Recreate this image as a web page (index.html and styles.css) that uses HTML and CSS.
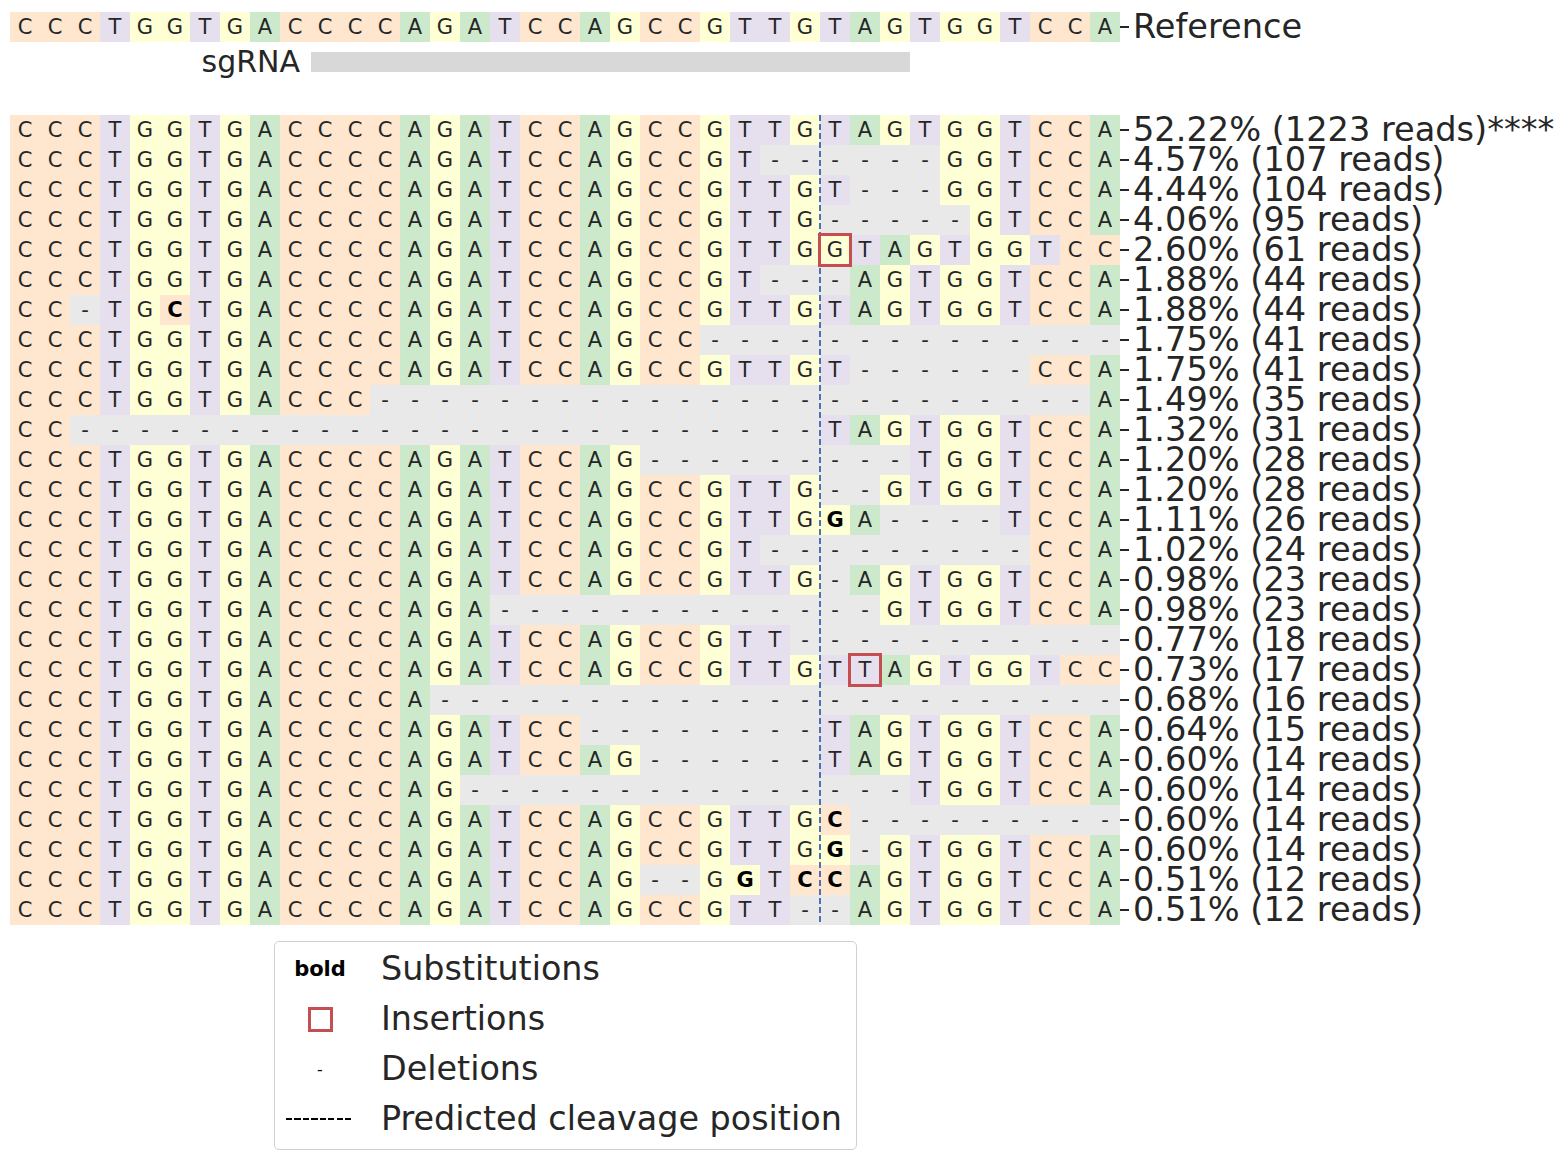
FILE: index.html
```html
<!DOCTYPE html>
<html lang="en">
<head>
<meta charset="utf-8">
<title>Allele plot</title>
<link rel="stylesheet" href="styles.css">
</head>
<body>
<div class="figure">
  <div class="row" id="ref-row"></div>
  <div class="sgrna-row">
    <div class="sgrna-label">sgRNA</div>
    <div class="sgrna-bar"></div>
  </div>
  <div class="alleles" id="alleles">
    <div class="cut"></div>
  </div>
  <div class="legend">
    <div class="legend-item">
      <div class="handle"><span class="h-bold">bold</span></div>
      <div class="legend-text">Substitutions</div>
    </div>
    <div class="legend-item">
      <div class="handle"><span class="h-ins"></span></div>
      <div class="legend-text">Insertions</div>
    </div>
    <div class="legend-item">
      <div class="handle"><span class="h-del">-</span></div>
      <div class="legend-text">Deletions</div>
    </div>
    <div class="legend-item">
      <div class="handle"><span class="h-cut"></span></div>
      <div class="legend-text">Predicted cleavage position</div>
    </div>
  </div>
</div>
<script src="script.js"></script>
</body>
</html>
```

FILE: styles.css
```css
body {
  margin: 0;
  background: #ffffff;
  font-family: "DejaVu Sans", "Liberation Sans", sans-serif;
  color: #262626;
}
.figure {
  padding: 12px 0 0 10px;
}
.row {
  display: flex;
  align-items: center;
  height: 30px;
}
.seq {
  display: grid;
  grid-template-columns: repeat(37, 30px);
  height: 30px;
}
.cell {
  height: 30px;
  line-height: 30px;
  text-align: center;
  font-size: 21px;
  position: relative;
}
.nA { background: #cce9cc; }
.nT { background: #e5dfee; }
.nC { background: #fee6cf; }
.nG { background: #ffffd6; }
.del { background: #e9e9e9; }
.sub { font-weight: bold; color: #000000; }
.ins::after {
  content: "";
  position: absolute;
  inset: -2px;
  border: 3.5px solid #c44e52;
  z-index: 2;
}
.tick {
  width: 9px;
  height: 1.5px;
  background: #262626;
  margin-right: 4px;
  flex: none;
}
.label {
  font-size: 33.6px;
  line-height: 30px;
  white-space: nowrap;
}
.sgrna-row {
  display: flex;
  align-items: center;
  height: 20px;
  margin-top: 10px;
}
.sgrna-label {
  width: 290px;
  text-align: right;
  font-size: 30px;
  line-height: 20px;
}
.sgrna-bar {
  margin-left: 11px;
  width: 599px;
  height: 20px;
  background: #d8d8d8;
}
.alleles {
  position: relative;
  margin-top: 43px;
}
.cut {
  position: absolute;
  left: 809px;
  top: 0;
  bottom: 0;
  width: 2px;
  background: repeating-linear-gradient(to bottom, #4c72b0 0 6px, transparent 6px 9px);
  z-index: 1;
}
.legend {
  margin: 16px 0 0 264px;
  width: 583px;
  box-sizing: border-box;
  border: 1px solid #d0d0d0;
  border-radius: 5px;
  padding: 2px 0 5px 11px;
}
.legend-item {
  display: flex;
  align-items: center;
  height: 50px;
}
.handle {
  width: 68px;
  margin-right: 27px;
  display: flex;
  justify-content: center;
  align-items: center;
}
.legend-text {
  font-size: 33.4px;
  line-height: 50px;
  white-space: nowrap;
}
.h-bold {
  font-weight: bold;
  font-size: 21px;
  color: #000000;
}
.h-ins {
  width: 25px;
  height: 25px;
  box-sizing: border-box;
  border: 3.5px solid #c44e52;
}
.h-del {
  font-size: 16px;
  color: #000000;
}
.h-cut {
  width: 68px;
  height: 1.5px;
  background: repeating-linear-gradient(to right, #000000 0 6px, transparent 6px 8.5px);
}
```

FILE: script.js
```js
const D = n => '-'.repeat(n);
const P = "CCCTGGTGACCCCAGATCCAGCCGTTG";
const REF = P + "TAGTGGTCCA";
const rows = [
  [REF, "52.22% (1223 reads)****"],
  ["CCCTGGTGACCCCAGATCCAGCCGT" + D(6) + "GGTCCA", "4.57% (107 reads)"],
  [P + "T" + D(3) + "GGTCCA", "4.44% (104 reads)"],
  [P + D(5) + "GTCCA", "4.06% (95 reads)"],
  [P + "GTAGTGGTCC", "2.60% (61 reads)", 27],
  ["CCCTGGTGACCCCAGATCCAGCCGT" + D(3) + "AGTGGTCCA", "1.88% (44 reads)"],
  ["CC-TGcTGACCCCAGATCCAGCCGTTGTAGTGGTCCA", "1.88% (44 reads)"],
  ["CCCTGGTGACCCCAGATCCAGCC" + D(14), "1.75% (41 reads)"],
  [P + "T" + D(6) + "CCA", "1.75% (41 reads)"],
  ["CCCTGGTGACCC" + D(24) + "A", "1.49% (35 reads)"],
  ["CC" + D(25) + "TAGTGGTCCA", "1.32% (31 reads)"],
  ["CCCTGGTGACCCCAGATCCAG" + D(9) + "TGGTCCA", "1.20% (28 reads)"],
  [P + D(2) + "GTGGTCCA", "1.20% (28 reads)"],
  [P + "gA" + D(4) + "TCCA", "1.11% (26 reads)"],
  ["CCCTGGTGACCCCAGATCCAGCCGT" + D(9) + "CCA", "1.02% (24 reads)"],
  [P + "-AGTGGTCCA", "0.98% (23 reads)"],
  ["CCCTGGTGACCCCAGA" + D(13) + "GTGGTCCA", "0.98% (23 reads)"],
  ["CCCTGGTGACCCCAGATCCAGCCGTT" + D(11), "0.77% (18 reads)"],
  [P + "TTAGTGGTCC", "0.73% (17 reads)", 28],
  ["CCCTGGTGACCCCA" + D(23), "0.68% (16 reads)"],
  ["CCCTGGTGACCCCAGATCC" + D(8) + "TAGTGGTCCA", "0.64% (15 reads)"],
  ["CCCTGGTGACCCCAGATCCAG" + D(6) + "TAGTGGTCCA", "0.60% (14 reads)"],
  ["CCCTGGTGACCCCAG" + D(15) + "TGGTCCA", "0.60% (14 reads)"],
  [P + "c" + D(9), "0.60% (14 reads)"],
  [P + "g-GTGGTCCA", "0.60% (14 reads)"],
  ["CCCTGGTGACCCCAGATCCAG--GgTccAGTGGTCCA", "0.51% (12 reads)"],
  ["CCCTGGTGACCCCAGATCCAGCCGTT--AGTGGTCCA", "0.51% (12 reads)"]
];

function fillRow(row, seq, label, ins) {
  const grid = document.createElement('div');
  grid.className = 'seq';
  for (let i = 0; i < seq.length; i++) {
    const ch = seq[i];
    const cell = document.createElement('div');
    if (ch === '-') {
      cell.className = 'cell del';
      cell.textContent = '-';
    } else {
      const up = ch.toUpperCase();
      cell.className = 'cell n' + up + (ch !== up ? ' sub' : '');
      cell.textContent = up;
    }
    if (i === ins) cell.classList.add('ins');
    grid.appendChild(cell);
  }
  const tick = document.createElement('div');
  tick.className = 'tick';
  const lab = document.createElement('div');
  lab.className = 'label';
  lab.textContent = label;
  row.appendChild(grid);
  row.appendChild(tick);
  row.appendChild(lab);
}

fillRow(document.getElementById('ref-row'), REF, 'Reference', -1);
const alleles = document.getElementById('alleles');
rows.forEach(r => {
  const row = document.createElement('div');
  row.className = 'row';
  fillRow(row, r[0], r[1], r.length > 2 ? r[2] : -1);
  alleles.appendChild(row);
});
```
